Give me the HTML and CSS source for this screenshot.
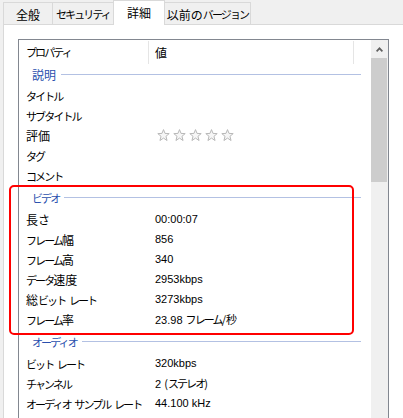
FILE: index.html
```html
<!DOCTYPE html>
<html lang="ja">
<head>
<meta charset="utf-8">
<title>プロパティ - 詳細</title>
<link rel="stylesheet" href="styles.css">
</head>
<body>
<div class="tabs">
  <div class="tab t1">全般</div>
  <div class="tab t2"><span class="ka">セキュリティ</span></div>
  <div class="tab t3 active">詳細</div>
  <div class="tab t4">以前の<span class="ka">バージョン</span></div>
</div>
<div class="panel">
  <div class="listbox">
    <div class="list">
      <div class="head">
        <div class="hcell c1"><span class="ka">プロパティ</span></div>
        <div class="hcell c2">値</div>
      </div>
      <div class="group first"><span>説明</span><i class="rule"></i></div>
      <div class="row"><div class="k"><span class="ka">タイトル</span></div><div class="v"></div></div>
      <div class="row"><div class="k"><span class="ka">サブタイトル</span></div><div class="v"></div></div>
      <div class="row"><div class="k">評価</div>
        <div class="stars">
          <svg class="star" viewBox="0 0 13 13"><path d="M6.5 0.6 L8.03 4.4 L12.2 4.6 L8.97 7.3 L10.04 11.5 L6.5 9.1 L2.96 11.5 L4.03 7.3 L0.8 4.6 L4.97 4.4 Z"/></svg>
          <svg class="star" viewBox="0 0 13 13"><path d="M6.5 0.6 L8.03 4.4 L12.2 4.6 L8.97 7.3 L10.04 11.5 L6.5 9.1 L2.96 11.5 L4.03 7.3 L0.8 4.6 L4.97 4.4 Z"/></svg>
          <svg class="star" viewBox="0 0 13 13"><path d="M6.5 0.6 L8.03 4.4 L12.2 4.6 L8.97 7.3 L10.04 11.5 L6.5 9.1 L2.96 11.5 L4.03 7.3 L0.8 4.6 L4.97 4.4 Z"/></svg>
          <svg class="star" viewBox="0 0 13 13"><path d="M6.5 0.6 L8.03 4.4 L12.2 4.6 L8.97 7.3 L10.04 11.5 L6.5 9.1 L2.96 11.5 L4.03 7.3 L0.8 4.6 L4.97 4.4 Z"/></svg>
          <svg class="star" viewBox="0 0 13 13"><path d="M6.5 0.6 L8.03 4.4 L12.2 4.6 L8.97 7.3 L10.04 11.5 L6.5 9.1 L2.96 11.5 L4.03 7.3 L0.8 4.6 L4.97 4.4 Z"/></svg>
        </div>
      </div>
      <div class="row"><div class="k"><span class="ka">タグ</span></div><div class="v"></div></div>
      <div class="row"><div class="k"><span class="ka">コメント</span></div><div class="v"></div></div>

      <div class="group next"><span class="ka">ビデオ</span><i class="rule"></i></div>
      <div class="row"><div class="k">長さ</div><div class="v">00:00:07</div></div>
      <div class="row"><div class="k"><span class="ka">フレーム</span>幅</div><div class="v">856</div></div>
      <div class="row"><div class="k"><span class="ka">フレーム</span>高</div><div class="v">340</div></div>
      <div class="row"><div class="k"><span class="ka">データ</span>速度</div><div class="v">2953kbps</div></div>
      <div class="row"><div class="k">総<span class="ka">ビット レート</span></div><div class="v">3273kbps</div></div>
      <div class="row"><div class="k"><span class="ka">フレーム</span>率</div><div class="v">23.98 <span class="jp"><span class="ka">フレーム</span>/秒</span></div></div>

      <div class="group next"><span class="ka">オーディオ</span><i class="rule"></i></div>
      <div class="row"><div class="k"><span class="ka">ビット レート</span></div><div class="v">320kbps</div></div>
      <div class="row"><div class="k"><span class="ka">チャンネル</span></div><div class="v">2 <span class="jp">(<span class="ka">ステレオ</span>)</span></div></div>
      <div class="row"><div class="k"><span class="ka">オーディオ サンプル レート</span></div><div class="v">44.100 kHz</div></div>
    </div>
    <div class="scroll">
      <div class="up">
        <svg class="chev" viewBox="0 0 7 5"><polyline points="0.6,4.4 3.5,1.3 6.4,4.4"/></svg>
      </div>
      <div class="thumb"></div>
    </div>
  </div>
</div>
<div class="highlight"></div>
</body>
</html>
```

FILE: styles.css
```css
html, body {
  margin: 0;
  padding: 0;
}

body {
  width: 403px;
  height: 418px;
  overflow: hidden;
  position: relative;
  background: #f0f0f0;
  color: #000;
  font-family: "Noto Sans CJK JP", sans-serif;
  font-size: 12px;
}

/* katakana runs: narrower, proportional-looking like Yu Gothic UI */
.ka {
  font-size: 11px;
  letter-spacing: -1.9px;
  word-spacing: 3px;
}

/* ---------- tabs ---------- */
.tabs {
  display: flex;
  align-items: flex-end;
  height: 24px;
  padding-left: 3px;
}

.tab {
  box-sizing: border-box;
  height: 22px;
  margin-left: -1px;
  padding-top: 2px;
  border: 1px solid #d9d9d9;
  border-bottom: none;
  background: #f0f0f0;
  display: flex;
  align-items: center;
  justify-content: center;
  line-height: 1;
  white-space: nowrap;
}

.t1 { margin-left: 0; width: 50px; }
.t2 { width: 62px; }
.t3 { width: 52px; }
.t4 { width: 87px; }

.tab.active {
  position: relative;
  z-index: 1;
  height: 25px;
  margin-bottom: -1px;
  padding-top: 0;
  background: #fff;
}

/* ---------- panel ---------- */
.panel {
  margin-left: 3px;
  height: 420px;
  padding: 14px 0 0 14px;
  border-top: 1px solid #d9d9d9;
  border-left: 1px solid #d9d9d9;
  background: #fff;
}

.listbox {
  box-sizing: border-box;
  display: flex;
  width: 371px;
  height: 420px;
  border: 1px solid #828790;
  background: #fff;
}

.list {
  width: 352px;
  flex: none;
}

/* header */
.head {
  display: flex;
  height: 24px;
}

.hcell {
  box-sizing: border-box;
  display: flex;
  align-items: center;
  white-space: nowrap;
}

.c1 {
  width: 129px;
  padding-left: 7px;
}

.c2 {
  width: 206px;
  margin-top: 1px;
  padding-left: 6px;
  padding-bottom: 1px;
  border-left: 1px solid #e5e5e5;
  border-right: 1px solid #e5e5e5;
}

/* groups */
.group {
  display: flex;
  align-items: center;
  height: 21px;
  padding-left: 13px;
  padding-right: 10px;
  color: #2a4fae;
  white-space: nowrap;
}

.group.next {
  height: 24px;
  padding-top: 1px;
  box-sizing: border-box;
}

.rule {
  flex: 1;
  height: 1px;
  margin-left: 5px;
  background: #b3c1e3;
}

/* rows */
.row {
  display: flex;
  align-items: center;
  height: 20px;
}

.k {
  box-sizing: border-box;
  width: 129px;
  padding-left: 7px;
  white-space: nowrap;
}

.v {
  padding-left: 7px;
  font-family: "Liberation Sans", "Noto Sans CJK JP", sans-serif;
  font-size: 11px;
  white-space: nowrap;
}

.jp {
  font-family: "Noto Sans CJK JP", sans-serif;
}

.stars {
  display: flex;
  gap: 3px;
  padding-left: 9px;
}

.star {
  width: 13px;
  height: 13px;
  fill: #f6f6f6;
  stroke: #b8b8b8;
  stroke-width: 1;
  stroke-linejoin: round;
}

/* scrollbar */
.scroll {
  width: 17px;
  flex: none;
  display: flex;
  flex-direction: column;
  background: #f0f0f0;
}

.up {
  height: 18px;
  display: flex;
  align-items: center;
  justify-content: center;
}

.chev {
  width: 7px;
  height: 5px;
  fill: none;
  stroke: #606060;
  stroke-width: 1.7;
}

.thumb {
  height: 124px;
  margin: 0 1px 0 0;
  background: #cdcdcd;
}

/* red annotation overlay */
.highlight {
  position: absolute;
  left: 9px;
  top: 185px;
  width: 345px;
  height: 150px;
  box-sizing: border-box;
  border: 2px solid #ff0000;
  border-radius: 5px;
}
```
